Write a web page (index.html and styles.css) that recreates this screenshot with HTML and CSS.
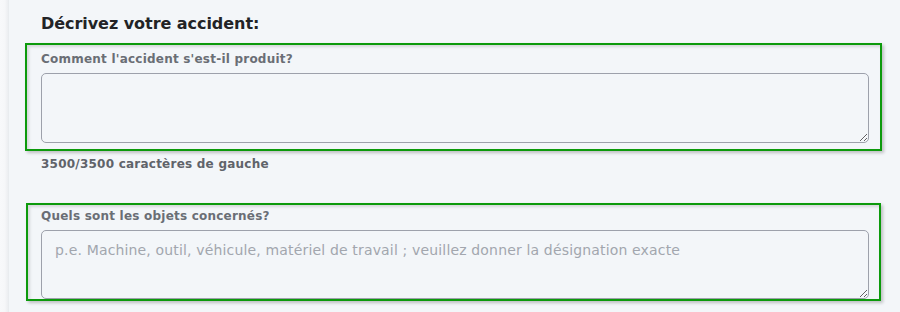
FILE: index.html
```html
<!DOCTYPE html>
<html lang="fr">
<head>
<meta charset="utf-8">
<title>Décrivez votre accident</title>
<link rel="stylesheet" href="styles.css">
</head>
<body>
<div class="page">
  <div class="rail"></div>
  <main class="main">
    <h2 class="title">Décrivez votre accident:</h2>
    <div class="box box-first">
      <label class="label" for="how">Comment l'accident s'est-il produit?</label>
      <textarea id="how" class="field field-first"></textarea>
    </div>
    <p class="counter">3500/3500 caractères de gauche</p>
    <div class="box box-second">
      <label class="label" for="objects">Quels sont les objets concernés?</label>
      <textarea id="objects" class="field field-second" placeholder="p.e. Machine, outil, véhicule, matériel de travail ; veuillez donner la désignation exacte"></textarea>
    </div>
  </main>
</div>
</body>
</html>
```

FILE: styles.css
```css
html, body {
  margin: 0;
  padding: 0;
  background: #f3f6f9;
  height: 100%;
  overflow: hidden;
}

body {
  font-family: "DejaVu Sans", "Open Sans", sans-serif;
}

.page {
  display: flex;
  min-height: 312px;
}

.rail {
  width: 8px;
  flex: none;
  background: linear-gradient(to right, #f8f9fb 0%, #f6f7f9 60%, #eceef1 100%);
  border-right: 1px solid #e9ecef;
}

.main {
  padding: 14px 0 0 16px;
  width: 857px;
}

.title {
  margin: 0 0 0 16px;
  font-size: 16px;
  line-height: 20px;
  font-weight: 700;
  letter-spacing: -0.05px;
  color: #222326;
}

.box {
  border: 2px solid #0c9a0c;
  box-shadow: inset 2px 2px 3px rgba(0, 0, 0, 0.13), 2px 2px 3px rgba(0, 0, 0, 0.22);
  display: flex;
  flex-direction: column;
  align-items: flex-start;
}

.box-first {
  margin-top: 9px;
  width: 857px;
  padding: 6px 11px 6px 14px;
  gap: 6px;
  box-sizing: border-box;
}

.box-second {
  margin-top: 31px;
  margin-left: 1px;
  width: 855px;
  padding: 3px 11px 0 13px;
  gap: 6px;
  box-sizing: border-box;
}

.label {
  font-size: 12px;
  line-height: 16px;
  font-weight: 700;
  letter-spacing: 0.22px;
  color: #6a6e75;
}

.field {
  box-sizing: border-box;
  width: 828px;
  margin: 0;
  border: 1px solid #9da1ab;
  border-radius: 5px;
  background: #f3f6f9;
  padding: 9px 13px;
  font-family: "DejaVu Sans", "Open Sans", sans-serif;
  font-size: 14px;
  line-height: 20px;
  letter-spacing: 0.16px;
  color: #333;
  resize: vertical;
  outline: none;
}

.field-first {
  height: 70px;
}

.field-second {
  height: 69px;
}

.field::placeholder {
  color: #a2a6ae;
  opacity: 1;
}

.counter {
  margin: 5px 0 0 16px;
  font-size: 12px;
  line-height: 16px;
  font-weight: 700;
  letter-spacing: 0.23px;
  color: #5f636a;
}
```
